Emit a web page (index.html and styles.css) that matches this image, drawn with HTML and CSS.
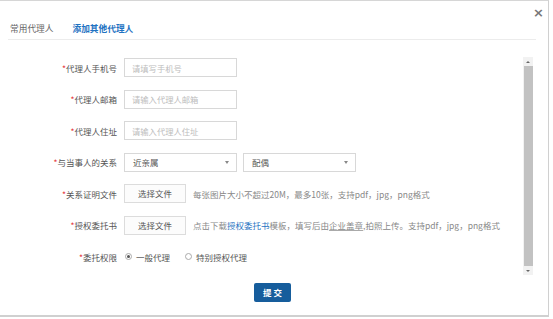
FILE: index.html
```html
<!DOCTYPE html>
<html>
<head>
    <meta charset="utf-8">
    <title>添加代理人</title>
    <link rel="stylesheet" href="styles.css">
</head>
<body>
    <div class="dialog">
        <div class="dialog-head">
            <div class="tab">常用代理人</div>
            <div class="tab active">添加其他代理人</div>
        </div>
        <span class="close">&times;</span>

        <div class="dialog-body">
            <form class="form">
                <div class="row">
                    <label class="label"><i>*</i>代理人手机号</label>
                    <input class="input" type="text" placeholder="请填写手机号">
                </div>
                <div class="row">
                    <label class="label"><i>*</i>代理人邮箱</label>
                    <input class="input" type="text" placeholder="请输入代理人邮箱">
                </div>
                <div class="row">
                    <label class="label"><i>*</i>代理人住址</label>
                    <input class="input" type="text" placeholder="请输入代理人住址">
                </div>
                <div class="row">
                    <label class="label"><i>*</i>与当事人的关系</label>
                    <div class="select"><span>近亲属</span><b class="caret"></b></div>
                    <div class="select"><span>配偶</span><b class="caret"></b></div>
                </div>
                <div class="row">
                    <label class="label"><i>*</i>关系证明文件</label>
                    <span class="file-btn">选择文件</span>
                    <span class="tip">每张图片大小不超过20M，最多10张，支持pdf，jpg，png格式</span>
                </div>
                <div class="row">
                    <label class="label"><i>*</i>授权委托书</label>
                    <span class="file-btn">选择文件</span>
                    <span class="tip">点击下载<a class="link">授权委托书</a>模板，填写后由<u>企业盖章</u>,拍照上传。支持pdf，jpg，png格式</span>
                </div>
                <div class="row">
                    <label class="label"><i>*</i>委托权限</label>
                    <span class="radio checked"></span><span class="radio-text">一般代理</span>
                    <span class="radio"></span><span class="radio-text">特别授权代理</span>
                </div>
                <div class="actions">
                    <button class="submit" type="button">提 交</button>
                </div>
            </form>

            <div class="scrollbar">
                <span class="arrow up"></span>
                <span class="thumb"></span>
                <span class="arrow down"></span>
            </div>
        </div>
    </div>
</body>
</html>
```

FILE: styles.css
```css
body {
    margin: 0;
    padding: 0;
    font-family: "Noto Sans CJK SC", "Noto Sans", sans-serif;
    font-size: 8.5px;
    color: #555;
    background-color: #fff;
}
.dialog {
    position: relative;
    width: 548px;
    height: 314px;
    background-color: #fff;
    border-top: 1px solid #d6d6d6;
    border-right: 1px solid #d0d0d0;
    border-bottom: 2px solid #d0d0d0;
}
.dialog-head {
    display: flex;
    align-items: center;
    height: 38px;
    margin: 0 12px 0 8px;
    padding: 0 2px;
    border-bottom: 1px solid #ececec;
}
.tab {
    font-size: 8.7px;
    color: #666;
    margin-right: 19px;
    padding-top: 16px;
}
.tab.active {
    color: #1f73c2;
    font-weight: bold;
}
.close {
    position: absolute;
    top: 4px;
    right: 4px;
    font-family: "DejaVu Sans", sans-serif;
    font-size: 13px;
    font-weight: bold;
    color: #777;
}
.dialog-body {
    display: flex;
    height: 276px;
}
.form {
    flex: 1;
    padding-top: 18px;
    display: flex;
    flex-direction: column;
    gap: 12.5px;
}
.row {
    display: flex;
    align-items: center;
    height: 19px;
}
.label {
    width: 117px;
    margin-right: 7px;
    text-align: right;
    white-space: nowrap;
}
.label i {
    font-style: normal;
    color: #e5383b;
}
.input {
    box-sizing: border-box;
    width: 113px;
    height: 19px;
    padding: 0 7px;
    border: 1px solid #d8d8d8;
    font-family: inherit;
    font-size: 8.3px;
    color: #555;
    outline: none;
}
.input::placeholder {
    color: #bdbdbd;
}
.select {
    box-sizing: border-box;
    display: flex;
    align-items: center;
    justify-content: space-between;
    width: 113px;
    height: 19px;
    margin-right: 6px;
    padding: 0 7px 0 8px;
    border: 1px solid #d8d8d8;
    color: #555;
}
.caret {
    width: 0;
    height: 0;
    border-left: 2.5px solid transparent;
    border-right: 2.5px solid transparent;
    border-top: 3px solid #888;
}
.file-btn {
    box-sizing: border-box;
    width: 62px;
    height: 19px;
    line-height: 17px;
    text-align: center;
    border: 1px solid #dcdcdc;
    background-color: #fcfcfc;
    color: #555;
    margin-right: 7px;
}
.tip {
    color: #888;
    font-size: 8.5px;
    white-space: nowrap;
}
.tip .link {
    color: #1f73c2;
}
.tip u {
    text-decoration-color: #aaa;
}
.radio {
    box-sizing: border-box;
    width: 7px;
    height: 7px;
    border: 1px solid #aaa;
    border-radius: 50%;
    margin: 0 4px 0 1px;
    position: relative;
}
.radio.checked::after {
    content: "";
    position: absolute;
    left: 1px;
    top: 1px;
    width: 3px;
    height: 3px;
    border-radius: 50%;
    background-color: #555;
}
.radio-text {
    margin-right: 14px;
}
.actions {
    padding-left: 254px;
    margin-top: 4px;
}
.submit {
    width: 37px;
    height: 19px;
    padding: 0;
    border: none;
    border-radius: 2px;
    background-color: #165d9c;
    color: #fff;
    font-family: inherit;
    font-size: 8.5px;
    font-weight: bold;
}
.scrollbar {
    display: flex;
    flex-direction: column;
    align-items: center;
    width: 10px;
    height: 218px;
    margin: 17px 15px 0 0;
    background-color: #f2f2f2;
}
.arrow {
    width: 0;
    height: 0;
    margin: 4px 0 3px;
    border-left: 2px solid transparent;
    border-right: 2px solid transparent;
}
.arrow.up {
    border-bottom: 2px solid #666;
}
.arrow.down {
    border-top: 2px solid #666;
}
.thumb {
    flex: 1;
    width: 9px;
    background-color: #c2c2c2;
}
```
